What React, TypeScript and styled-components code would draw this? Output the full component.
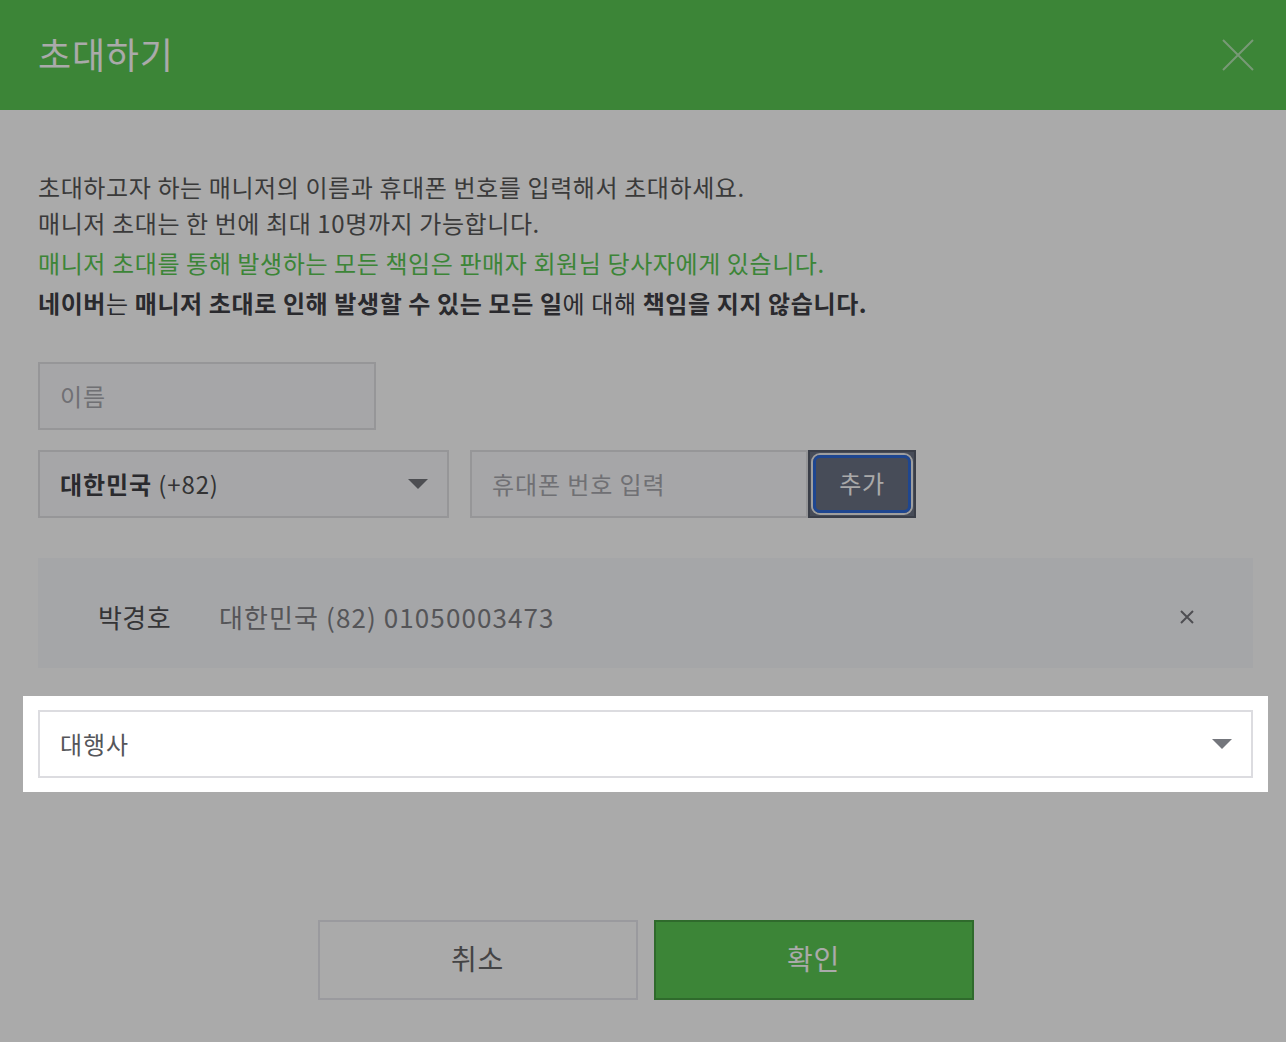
import React from 'react'
import styled, { createGlobalStyle } from 'styled-components'

const GlobalStyle = createGlobalStyle`
  html, body {
    margin: 0;
    padding: 0;
    background: #ffffff;
  }
  body {
    font-family: "Noto Sans CJK KR", "Noto Sans", sans-serif;
    color: #575757;
  }
  * {
    box-sizing: border-box;
  }
`

const GREEN = '#5ac853'

const SModal = styled.div`
  width: 1286px;
  min-height: 1042px;
  background: #ffffff;
`

const SHeader = styled.header`
  display: flex;
  align-items: center;
  justify-content: space-between;
  height: 110px;
  padding: 0 32px 0 38px;
  background: ${GREEN};
`

const STitle = styled.h1`
  margin: 0 0 4px 0;
  font-size: 36px;
  font-weight: 400;
  letter-spacing: 0.8px;
  color: #ffffff;
`

const SClose = styled.button`
  display: flex;
  width: 32px;
  height: 32px;
  padding: 0;
  border: none;
  background: none;
  color: rgba(255, 255, 255, 0.55);
`

const SBody = styled.div`
  padding: 59px 33px 0 38px;
`

const SNotice = styled.div`
  font-size: 24px;
  letter-spacing: 0.6px;
`

const SLine = styled.p<{ $tone?: 'green' | 'strong' }>`
  margin: 0;
  line-height: ${({ $tone }) => ($tone ? '40px' : '36px')};
  color: ${({ $tone }) =>
    $tone === 'green' ? GREEN : $tone === 'strong' ? '#404045' : '#575757'};
  &:nth-child(3) {
    margin-top: 2px;
  }
  b {
    font-weight: 700;
  }
`

const SForm = styled.div`
  display: flex;
  flex-direction: column;
  gap: 20px;
  margin-top: 39px;
`

const SRow = styled.div`
  display: flex;
  align-items: stretch;
`

const SInput = styled.div<{ $width: number }>`
  display: flex;
  align-items: center;
  width: ${({ $width }) => $width}px;
  height: 68px;
  padding: 0 20px 2px 20px;
  border: 2px solid #e2e2e4;
  background: #f9fafc;
  font-size: 24px;
  letter-spacing: 0.9px;
  color: #a8a8ae;
`

const SSelect = styled.div<{ $width?: number; $light?: boolean }>`
  display: flex;
  align-items: center;
  justify-content: space-between;
  width: ${({ $width }) => ($width ? `${$width}px` : '100%')};
  height: 68px;
  padding: 0 19px 2px 20px;
  margin-right: ${({ $width }) => ($width ? '21px' : '0')};
  border: 2px solid ${({ $light }) => ($light ? '#dcdce0' : '#e2e2e4')};
  background: ${({ $light }) => ($light ? '#ffffff' : '#f9fafc')};
  font-size: 24px;
  letter-spacing: 0.9px;
  color: ${({ $light }) => ($light ? '#55565a' : '#4d4d4f')};

  b {
    font-weight: 700;
    color: #404045;
  }
`

const SArrow = styled.span`
  width: 0;
  height: 0;
  margin-top: 2px;
  border-left: 10px solid transparent;
  border-right: 10px solid transparent;
  border-top: 10px solid #74767c;
`

const SAddButton = styled.button`
  position: relative;
  width: 108px;
  border: 2px solid #575d6c;
  background: #6b7285;
  font-family: inherit;
  font-size: 24px;
  letter-spacing: 0.6px;
  color: #ffffff;
  padding: 0 0 4px 0;

  &::after {
    content: '';
    position: absolute;
    inset: 3px;
    border: 3px solid #2d69d8;
    border-radius: 7px;
    box-shadow: 0 0 0 2px #eeeeee;
  }
`

const SInvitee = styled.div`
  display: flex;
  align-items: center;
  height: 110px;
  margin-top: 40px;
  padding: 6px 58px 0 60px;
  background: #f8f9fc;
  font-size: 26px;
`

const SName = styled.span`
  width: 121px;
  letter-spacing: 0.4px;
  color: #4f4f52;
`

const SPhone = styled.span`
  flex: 1;
  letter-spacing: 1.1px;
  color: #808084;
`

const SRemove = styled.button`
  display: flex;
  width: 16px;
  height: 16px;
  margin-top: 1px;
  padding: 0;
  border: none;
  background: none;
  color: #76767c;
`

const SSpotlight = styled.div`
  position: relative;
  z-index: 2;
  margin: 28px -15px 0 -15px;
  padding: 14px 15px;
  background: #ffffff;
  box-shadow: 0 0 0 3000px rgba(0, 0, 0, 0.333);
`

const SFooter = styled.div`
  display: flex;
  justify-content: center;
  gap: 16px;
  margin-top: 128px;
`

const SButton = styled.button<{ $primary?: boolean }>`
  width: 320px;
  height: 80px;
  padding: 0 0 4px 0;
  border: 2px solid ${({ $primary }) => ($primary ? '#47a042' : '#e8e8ee')};
  background: ${({ $primary }) => ($primary ? GREEN : '#ffffff')};
  font-family: inherit;
  font-size: 28px;
  letter-spacing: 0.8px;
  color: ${({ $primary }) => ($primary ? '#ffffff' : '#666668')};
`

const CloseIcon = () => (
  <svg width="32" height="32" viewBox="0 0 32 32">
    <path d="M1 1 L31 31 M31 1 L1 31" stroke="currentColor" strokeWidth="2" />
  </svg>
)

const SmallX = () => (
  <svg width="16" height="16" viewBox="0 0 16 16">
    <path d="M2 2 L14 14 M14 2 L2 14" stroke="currentColor" strokeWidth="2" />
  </svg>
)

const App = () => {
  return (
    <>
      <GlobalStyle />
      <SModal>
        <SHeader>
          <STitle>초대하기</STitle>
          <SClose aria-label="닫기">
            <CloseIcon />
          </SClose>
        </SHeader>

        <SBody>
          <SNotice>
            <SLine>초대하고자 하는 매니저의 이름과 휴대폰 번호를 입력해서 초대하세요.</SLine>
            <SLine>매니저 초대는 한 번에 최대 10명까지 가능합니다.</SLine>
            <SLine $tone="green">
              매니저 초대를 통해 발생하는 모든 책임은 판매자 회원님 당사자에게 있습니다.
            </SLine>
            <SLine $tone="strong">
              <b>네이버</b>는 <b>매니저 초대로 인해 발생할 수 있는 모든 일</b>에 대해{' '}
              <b>책임을 지지 않습니다.</b>
            </SLine>
          </SNotice>

          <SForm>
            <SInput $width={338}>이름</SInput>
            <SRow>
              <SSelect $width={411}>
                <span>
                  <b>대한민국</b> (+82)
                </span>
                <SArrow />
              </SSelect>
              <SInput $width={338}>휴대폰 번호 입력</SInput>
              <SAddButton>추가</SAddButton>
            </SRow>
          </SForm>

          <SInvitee>
            <SName>박경호</SName>
            <SPhone>대한민국 (82) 01050003473</SPhone>
            <SRemove aria-label="삭제">
              <SmallX />
            </SRemove>
          </SInvitee>

          <SSpotlight>
            <SSelect $light>
              <span>대행사</span>
              <SArrow />
            </SSelect>
          </SSpotlight>

          <SFooter>
            <SButton>취소</SButton>
            <SButton $primary>확인</SButton>
          </SFooter>
        </SBody>
      </SModal>
    </>
  )
}

export default App
